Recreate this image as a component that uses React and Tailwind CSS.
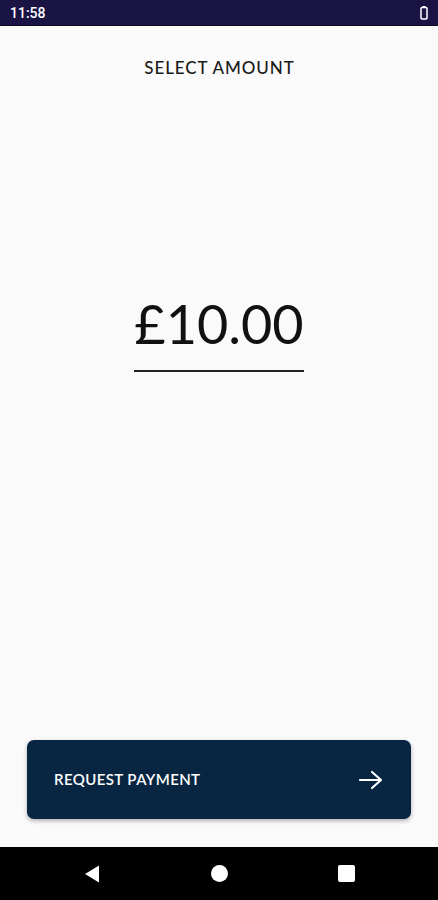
export default function App() {
  return (
    <div className="w-[438px] h-[900px] flex flex-col bg-[#fafafa] overflow-hidden" style={{ fontFamily: "Lato, 'Noto Sans', sans-serif" }}>
      <div className="h-[26px] bg-[#1a1444] flex items-center justify-between pl-[10px] pr-[9px] border-b border-[#0b0b1f]">
        <span className="text-white text-[14px] font-['Roboto',sans-serif] font-medium leading-none">11:58</span>
        <svg width="10" height="16" viewBox="0 0 10 16">
          <rect x="3.5" y="1" width="3" height="1.5" fill="white" />
          <rect x="2" y="2.5" width="6" height="11.5" rx="1" fill="none" stroke="white" strokeWidth="1.5" />
        </svg>
      </div>
      <div className="flex-1 flex flex-col items-center">
        <div className="mt-[30px] text-[17px] leading-[24px] tracking-[0.9px] text-[#1a1a1a] font-medium pl-[1px]">SELECT AMOUNT</div>
        <div className="mt-[212px] flex flex-col items-center">
          <div className="text-[54px] leading-[64px] text-[#111] tracking-[0px]">£10.00</div>
          <div className="mt-[14px] w-[170px] h-[2px] bg-[#222]" />
        </div>
        <div className="flex-1" />
        <button className="mx-[27px] mb-[28px] self-stretch h-[79px] rounded-[7px] bg-[#082541] shadow-[0_2px_4px_rgba(0,0,0,0.3)] flex items-center justify-between pl-[27px] pr-[27px]">
          <span className="text-white text-[15px] font-semibold tracking-[0.4px]">REQUEST PAYMENT</span>
          <svg width="26" height="22" viewBox="0 0 26 22" fill="none" stroke="white" strokeWidth="2.2" strokeLinecap="round" strokeLinejoin="round">
            <path d="M2 11h21M14 3l9 8-9 8" />
          </svg>
        </button>
      </div>
      <div className="h-[53px] bg-black flex items-center justify-center">
        <div className="w-[127px] flex justify-center">
          <svg width="18" height="20" viewBox="0 0 18 20"><path d="M16 1.5v17L2 10z" fill="white" /></svg>
        </div>
        <div className="w-[127px] flex justify-center">
          <div className="w-[17px] h-[17px] rounded-full bg-white" />
        </div>
        <div className="w-[127px] flex justify-center pl-[1px]">
          <div className="w-[17px] h-[17px] rounded-[2px] bg-white" />
        </div>
      </div>
    </div>
  );
}
